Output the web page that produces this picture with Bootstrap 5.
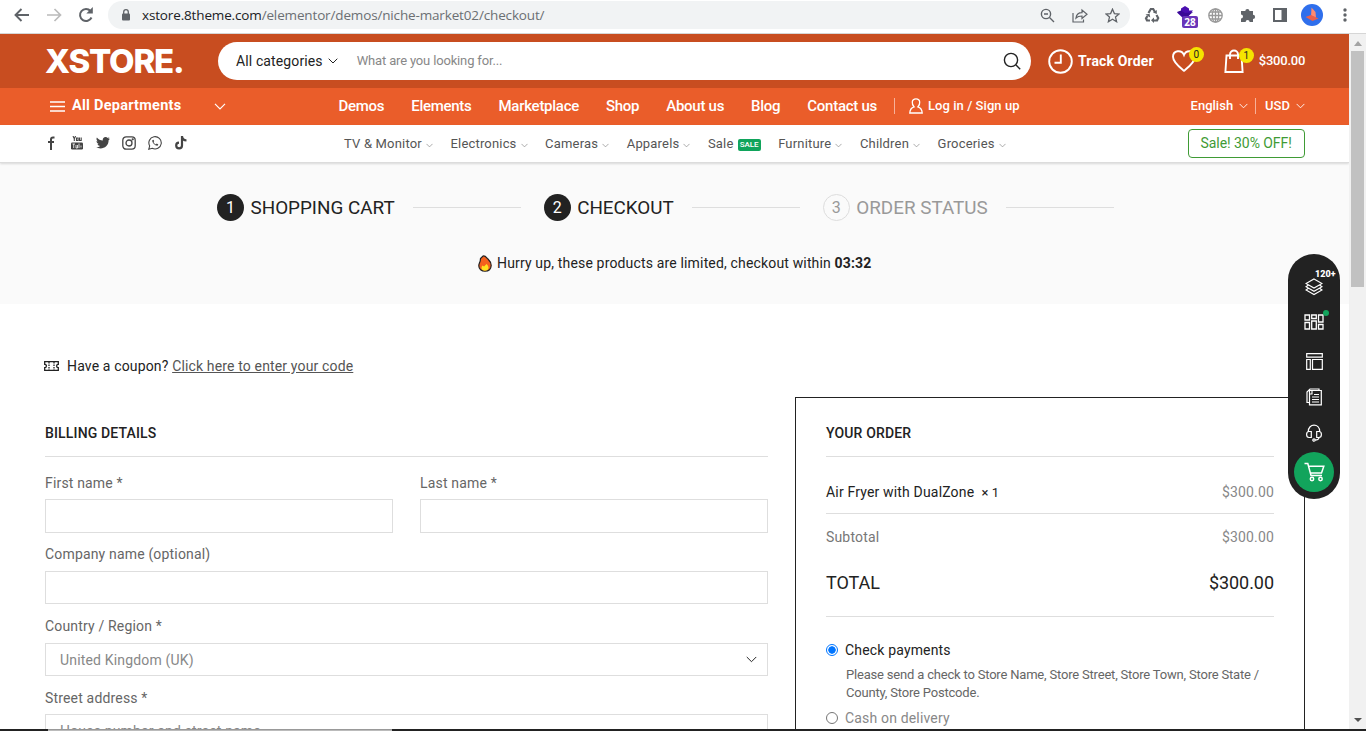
<!DOCTYPE html>
<html lang="en">
<head>
<meta charset="utf-8">
<title>Checkout – XStore</title>
<link rel="stylesheet" href="https://cdn.jsdelivr.net/npm/bootstrap@5.3.0/dist/css/bootstrap.min.css">
<style>
html,body{height:731px;overflow:hidden}
body{font-family:Roboto,"Liberation Sans",sans-serif;font-size:14px;line-height:22px;color:#222;background:#fff}
svg{display:block;flex:none;fill:none;stroke:currentColor}
svg[stroke=none]{stroke:none}
a{color:inherit;text-decoration:none}
.nw{white-space:nowrap}
.chrome{height:34px;border-bottom:1px solid #d6d6d6;padding-bottom:3px;color:#5f6368}
.omni{margin-left:14px;width:1022px;height:28px;border-radius:14px;background:#f1f3f4;padding-left:13px}
.url{font-family:"Open Sans","Noto Sans",sans-serif;font-size:13.5px;margin-left:11px;letter-spacing:-.15px;color:#6b6f73}
.url b{font-weight:400;color:#202124}
.view{height:695px}
.page{width:1349px;overflow:hidden}
.top1{height:54px;background:#c84d20;color:#fff;padding-left:45px}
.logo{width:173px;font-family:Inter,sans-serif;font-weight:800;font-size:33px;line-height:54px;letter-spacing:-1.2px}
.search{width:813px;height:38px;border-radius:19px;background:#fff;color:#222;padding:0 10px 0 18px}
.bubble{position:absolute;width:15px;height:15px;border-radius:50%;background:#f5e400;color:#222;font-size:10px;line-height:15px;text-align:center}
.top2{height:37px;background:#ea5d2a;color:#fff;font-weight:500;font-size:15px;padding:0 0 1px 50px}
.menu1{gap:27px;margin-left:112px;letter-spacing:-.27px}
.bar{width:1px;height:16px;background:#f7b199}
.top3{height:38px;border-bottom:1px solid #dcdcdc;box-shadow:0 1px 2px #0002;padding-left:44px;font-size:13px;color:#555;position:relative}
.menu2{gap:17.6px;margin-left:156px;letter-spacing:.18px}
.menu2 svg{color:#888;margin:3px 0 0 4px}
.tag{background:#10a45c;color:#fff;font-size:8px;font-weight:500;line-height:12px;height:12px;width:23px;text-align:center;border-radius:2px;margin:3px 0 0 4px;letter-spacing:-.1px}
.offer{width:117px;height:29px;border:1px solid #3f9b35;border-radius:4px;color:#3f9b35;font-size:14px;letter-spacing:-.05px;margin-left:182px;padding-bottom:1px}
.steps{height:141px;background:#fafafa;padding:31px 0 0 217px}
.num{width:27px;height:27px;border-radius:50%;background:#222;color:#fff;font-size:16px;margin-right:6.500px}
.num.off{background:none;border:1px solid #ddd;color:#999}
.step{font-size:18.85px;height:27px}
.rule{width:108px;height:1px;background:#dedede;margin:0 23px 0 18px}
.hurry{margin:31px 0 0 261px;height:22px;letter-spacing:.16px}
.coupon{margin:51px 0 0 44px;letter-spacing:.15px}
.cols{margin:20px 0 0 45px;width:1260px}
.left{width:723px;padding-top:25px}
.ttl{font-weight:500;height:34.5px;border-bottom:1px solid #dedede;font-size:14px;letter-spacing:.15px;line-height:23px}
.fld{margin-top:11px;color:#666;letter-spacing:.17px}
.fld .ctl{margin-top:6px;height:33px;border:1px solid #dedede;padding:1px 10px 0 14px;color:#888}
.first .fld{margin-top:15px;width:348px}.first .ctl{margin-top:5px;height:34px}
.street .ctl{margin-top:5px}
.order{width:510px;height:420px;border:1px solid #222;padding:24px 30px 0}
.ln{border-bottom:1px solid #dedede;letter-spacing:.17px;color:#777}
.rad{width:12px;height:12px;border-radius:50%;border:1px solid #767676;margin-right:7px}
.rad.on{border-color:#0075ff;background:radial-gradient(circle,#0075ff 0 3.4px,#fff 4px)}
.sb{width:17px;background:#f1f1f1}
.thumb{width:13px;height:236px;background:#c1c1c1}
.dock{position:absolute;left:1288px;top:254px;width:52px;height:245px;border-radius:26px;background:#222;color:#fff}
.cartbtn{width:40px;height:40px;border-radius:50%;background:#12a45c}
.task{height:2px;background:#222}.task i{margin-left:48px;width:344px;height:2px;background:#bbb;border-top:1px solid #999}
</style>
<script src="https://cdn.jsdelivr.net/npm/bootstrap@5.3.0/dist/js/bootstrap.bundle.min.js"></script>
</head>
<body>
<svg width="0" height="0" class="position-absolute"><defs><symbol id="v" viewBox="0 0 10 6"><path d="M.7.7 5 5 9.3.7"/></symbol></defs></svg>

<div class="chrome d-flex align-items-center">
  <svg width="16" height="14" viewBox="0 0 16 14" stroke-width="1.900" style="margin-left:14px"><path d="M15 7H2M7.500 1l-6 6 6 6"/></svg>
  <svg width="16" height="14" viewBox="0 0 16 14" stroke-width="1.700" style="margin-left:16px;color:#bbb"><path d="M1 7h13M8.500 1l6 6-6 6"/></svg>
  <svg width="16" height="16" viewBox="0 0 16 16" stroke-width="2" style="margin-left:16px"><path d="M13.500 10.500A6 6 0 1 1 12.500 4"/><path d="M14.800 0v6.500H8.300z" fill="currentColor" stroke="none"/></svg>
  <div class="omni d-flex align-items-center">
    <svg width="10" height="12" viewBox="0 0 10 12"><rect x="1" y="4.500" width="8" height="7" rx="1" fill="currentColor" stroke="none"/><path d="M2.700 5V3a2.300 2.300 0 0 1 4.600 0v2" stroke-width="1.300"/></svg>
    <div class="url nw"><b>xstore.8theme.com</b>/elementor/demos/niche-market02/checkout/</div>
    <svg class="ms-auto" width="15" height="15" viewBox="0 0 15 15" stroke-width="1.400"><circle cx="6" cy="6" r="4.600"/><path d="M9.500 9.500l4.500 4.500M4 6h4"/></svg>
    <svg width="16" height="15" viewBox="0 0 16 15" stroke-width="1.200" style="margin-left:17px"><path d="M1 5v9h10.500v-2.500M4 10c.5-4 3-5.300 6-5.300V2l5 4.300-5 4.200V8C7.500 8 5.500 8.400 4 10z"/></svg>
    <svg width="15" height="15" viewBox="0 0 15 15" stroke-width="1.300" style="margin:0 10px 0 17px"><path d="M7.500 1.200l1.900 4.400 4.700.4-3.600 3.100 1.100 4.600-4.100-2.500-4.100 2.500 1.100-4.600L.9 6l4.700-.4z"/></svg>
  </div>
  <svg width="16" height="16" viewBox="0 0 16 16" stroke-width="2.200" style="margin-left:14px"><path d="M4.500 6l2.300-4h2.400l2 3.500M12.500 8l1.700 3-1.200 2.500H9.800M6 13.500H3L2 11.300 3.500 9"/><path d="M12.800 3v4l-3.800-1.500zM10 10.500v5.500l-3-2.700zM1.500 7.500l4-.8.800 3.700z" fill="currentColor" stroke="none"/></svg>
  <div class="position-relative" style="margin-left:16px;width:24px;height:22px">
    <svg width="18" height="16" viewBox="0 0 18 16" stroke="none"><path d="M9 2l4 2.500v2h4L9 16 1 8.500 5 7V4.500z" fill="#4a0fb0"/><path d="M1 8l4-1.500L9 9l8-1-8 7z" fill="#3a0a96"/></svg>
    <span class="position-absolute text-center text-white" style="left:6px;top:12px;width:16px;height:12px;border-radius:2px;background:#6a35b9;font:700 10px/12px 'Open Sans'">28</span>
  </div>
  <svg width="15" height="15" viewBox="0 0 15 15" style="margin-left:8px;color:#999" stroke-width="1.300"><circle cx="7.500" cy="7.500" r="6.700"/><ellipse cx="7.500" cy="7.500" rx="3.200" ry="6.700"/><path d="M7.500 1v13M1 7.500h13M2 4h11M2 11h11"/></svg>
  <svg width="16" height="16" viewBox="0 0 16 16" stroke="none" style="margin-left:17px;fill:#5f6368"><path d="M1 4h4.300a2.100 2.100 0 1 1 4.200 0H13v3.800a2.100 2.100 0 1 1 0 4.200v3H9.600a2 2 0 1 0-4 0H1v-3.500a2 2 0 1 0 0-4z"/></svg>
  <svg width="14" height="14" viewBox="0 0 14 14" style="margin-left:17px" stroke-width="2"><path d="M1 1h12v12H1z"/><path d="M8.500 1H13v12H8.500z" fill="currentColor" stroke="none"/></svg>
  <svg width="22" height="22" viewBox="0 0 22 22" stroke="none" style="margin-left:14px"><circle cx="11" cy="11" r="11" fill="#2f6fec"/><path d="M10.500 3.500l4 4.500.5 6-5-2.500z" fill="#ff8a70"/><path d="M4.500 13l5.500-2 7.500 3.500-6 2.500z" fill="#e9604e"/></svg>
  <svg width="4" height="14" viewBox="0 0 4 14" style="margin-left:20px;fill:#5f6368" stroke="none"><circle cx="2" cy="2" r="1.700"/><circle cx="2" cy="7" r="1.700"/><circle cx="2" cy="12" r="1.700"/></svg>
</div>

<div class="view d-flex">
<div class="page">
  <header>
    <div class="top1 d-flex align-items-center">
      <div class="logo nw">XSTORE.</div>
      <div class="search d-flex align-items-center">
        <span class="nw" style="letter-spacing:.12px">All categories</span>
        <svg width="10" height="6" style="margin-left:5px"><use href="#v"/></svg>
        <span class="nw" style="margin-left:19px;font-size:13px;color:#888;letter-spacing:-.16px">What are you looking for...</span>
        <svg class="ms-auto" width="18" height="18" viewBox="0 0 18 18" stroke-width="1.400"><circle cx="8" cy="8" r="6.600"/><path d="M13 13l4.200 4.200"/></svg>
      </div>
      <svg width="25" height="25" viewBox="0 0 25 25" stroke-width="1.900" style="margin-left:17px"><circle cx="12.500" cy="12.500" r="11.300"/><path d="M12.800 5.500v8.300H6.500"/></svg>
      <b class="nw" style="margin-left:5px;font-weight:700;letter-spacing:.16px">Track Order</b>
      <div class="position-relative" style="margin-left:18px;width:34px">
        <svg width="24" height="22" viewBox="0 0 24 22" stroke-width="1.900"><path d="M12 20.800C8 17.500 1 12.500 1 6.800 1 .5 9.500-1 12 5c2.500-6 11-4.500 11 1.800 0 5.700-7 10.700-11 14z"/></svg>
        <span class="bubble" style="left:17px;top:-3px">0</span>
      </div>
      <div class="position-relative" style="margin-left:18px;width:35px">
        <svg width="20" height="24" viewBox="0 0 20 24" stroke-width="1.900"><path d="M2.500 6.500h15L18.600 23H1.400z"/><path d="M6 10V5.500a4 4 0 0 1 8 0V10"/></svg>
        <span class="bubble" style="left:15px;top:-1px">1</span>
      </div>
      <span class="nw" style="font-weight:500;font-size:13px;letter-spacing:-.25px">$300.00</span>
    </div>
    <div class="top2 d-flex align-items-center">
      <svg width="15" height="11" viewBox="0 0 15 11" stroke-width="1.600"><path d="M0 1h15M0 5.500h15M0 10h15"/></svg>
      <span class="nw" style="margin-left:7px;font-weight:700;font-size:14.5px;letter-spacing:.25px">All Departments</span>
      <svg width="12" height="7" style="margin-left:33px"><use href="#v"/></svg>
      <nav class="menu1 d-flex nw" style="margin-top:-1px"><a>Demos</a><a>Elements</a><a>Marketplace</a><a>Shop</a><a>About us</a><a>Blog</a><a>Contact us</a></nav>
      <span class="bar" style="margin-left:17px"></span>
      <svg width="14" height="16" viewBox="0 0 14 16" stroke-width="1.300" style="margin-left:14px"><path d="M7 .8c5 0 4.200 5.700 2 8 2.500.7 4 2.700 4.200 6.200H.8C1 11.500 2.500 9.500 5 8.800 2.800 6.500 2 .8 7 .8z"/></svg>
      <span class="nw" style="margin-left:5px;font-size:13px;letter-spacing:.06px">Log in / Sign up</span>
      <span class="nw" style="margin-left:171px;font-size:13px">English</span>
      <svg width="9" height="6" style="margin-left:6px"><use href="#v"/></svg>
      <span class="bar" style="margin:0 9px 0 7px"></span>
      <span style="font-size:13px">USD</span>
      <svg width="9" height="6" style="margin-left:6px"><use href="#v"/></svg>
    </div>
    <div class="top3 d-flex align-items-center">
      <div class="d-flex align-items-center" style="gap:12px;margin-top:-2px;color:#444">
        <svg width="14" height="14" viewBox="0 0 14 14" stroke-width="2"><path d="M10.500 1.500H9c-1.500 0-2 .7-2 2V14M4 6h6"/></svg>
        <svg width="14" height="14" viewBox="0 0 14 14" stroke-width="1.100"><path d="M3 0l1.300 2.700L5.600 0M4.300 2.500V5M6.500 2h1.600v2.500H6.500zM9.500 1.500v3h1.700v-3"/><rect x="1" y="6.500" width="12" height="7" rx="1.200" fill="currentColor" stroke="none"/><path d="M2.500 8h2.500M3.700 8v4M6 9v3h1.500V9M9 7.500V12M11 9.500v2" stroke="#fff" stroke-width=".8"/></svg>
        <svg width="14" height="14" viewBox="0 0 14 14" stroke="none" style="fill:#444"><path d="M14 2.700l-1.400 1.500c.1 5-3.800 8.200-8 8.200-1.700 0-3.300-.5-4.600-1.300 1.600.2 3-.3 4.200-1.200-1.300 0-2.300-.8-2.700-2h1.200C1.400 7.500.5 6.400.5 5l1.300.4C.5 4.500.1 2.900.9 1.600 2.400 3.400 4.400 4.500 6.800 4.600 6.300 2.500 7.900 1 9.600 1c.8 0 1.500.3 2.100.9l1.800-.7-1.200 1.600z"/></svg>
        <svg width="14" height="14" viewBox="0 0 14 14" stroke-width="1.300"><rect x=".8" y=".8" width="12.400" height="12.400" rx="3.400"/><circle cx="7" cy="7" r="3"/><circle cx="10.700" cy="3.300" r=".5"/></svg>
        <svg width="14" height="14" viewBox="0 0 14 14" stroke-width="1.100"><path d="M.8 13.200l.9-3.300A6.200 6.200 0 1 1 4.200 12.300z"/><path d="M4.300 4.200c-.5 2.500 3.200 6 5.500 5.400l.5-1.200-1.600-.8-.8.900C6.800 8 5.900 7.200 5.500 6.100l.7-.8-.7-1.500z" fill="currentColor" stroke="none"/></svg>
        <svg width="14" height="14" viewBox="0 0 14 14" stroke-width="2.200"><path d="M8 0v9.500A2.900 2.900 0 1 1 5 6.600M8 .5C8.300 3 10 4.300 12.500 4.500"/></svg>
      </div>
      <nav class="menu2 d-flex nw">
        <a class="d-flex align-items-center">TV &amp; Monitor<svg width="7" height="5"><use href="#v"/></svg></a>
        <a class="d-flex align-items-center">Electronics<svg width="7" height="5"><use href="#v"/></svg></a>
        <a class="d-flex align-items-center">Cameras<svg width="7" height="5"><use href="#v"/></svg></a>
        <a class="d-flex align-items-center">Apparels<svg width="7" height="5"><use href="#v"/></svg></a>
        <a class="d-flex align-items-center">Sale<span class="tag">SALE</span></a>
        <a class="d-flex align-items-center">Furniture<svg width="7" height="5"><use href="#v"/></svg></a>
        <a class="d-flex align-items-center">Children<svg width="7" height="5"><use href="#v"/></svg></a>
        <a class="d-flex align-items-center">Groceries<svg width="7" height="5"><use href="#v"/></svg></a>
      </nav>
      <a class="offer nw d-flex align-items-center justify-content-center">Sale! 30% OFF!</a>
    </div>
  </header>

  <section class="steps">
    <div class="step d-flex align-items-center nw">
      <span class="num d-flex align-items-center justify-content-center">1</span>SHOPPING CART<i class="rule"></i>
      <span class="num d-flex align-items-center justify-content-center">2</span>CHECKOUT<i class="rule"></i>
      <span class="num off d-flex align-items-center justify-content-center">3</span><span style="color:#999">ORDER STATUS</span><i class="rule"></i>
    </div>
    <div class="hurry d-flex align-items-center nw">
      <svg width="14" height="17" viewBox="0 0 14 17"><path d="M5 1c3-.5 3.500 2 5 3 2 2 3.300 4 3.200 6.500-.2 3.700-2.700 5.700-6.200 5.700S.8 14 .8 10.800C.8 8 2.500 7.500 2.500 3.500z" fill="#f4611e" stroke="#222" stroke-width="1.200"/><path d="M4.500 10.500l1.500 1L8.500 9c1.500 1.500 2.200 3 2 4.300-.3 1.700-1.500 2.400-3.500 2.400S3.700 15 3.500 13.300c-.1-1 .3-1.900 1-2.800z" fill="#ffe21f" stroke="none"/></svg>
      <span style="margin-left:5px">Hurry up, these products are limited, checkout within <b style="font-weight:700">03:32</b></span>
    </div>
  </section>

  <main>
    <div class="coupon d-flex align-items-center nw">
      <svg width="15" height="10" viewBox="0 0 15 10" stroke-width="1.300"><path d="M.7.700h13.600v2.600a1.700 1.700 0 0 0 0 3.400v2.600H.7V6.700a1.700 1.700 0 0 0 0-3.400z"/><path d="M5 1v8M10 1v8" stroke-dasharray="1.500 1"/></svg>
      <span style="margin-left:8px">Have a coupon? <a class="text-decoration-underline" style="color:#555">Click here to enter your code</a></span>
    </div>
    <div class="cols d-flex justify-content-between">
      <form class="left">
        <div class="ttl">BILLING DETAILS</div>
        <div class="first d-flex justify-content-between">
          <div class="fld">First name *<div class="ctl"></div></div>
          <div class="fld">Last name *<div class="ctl"></div></div>
        </div>
        <div class="fld" style="margin-top:10px">Company name (optional)<div class="ctl"></div></div>
        <div class="fld">Country / Region *<div class="ctl d-flex align-items-center justify-content-between">United Kingdom (UK)<svg width="11" height="7" stroke-width=".9" style="color:#222"><use href="#v"/></svg></div></div>
        <div class="fld street">Street address *<div class="ctl d-flex align-items-center">House number and street name</div></div>
      </form>
      <aside class="order">
        <div class="ttl">YOUR ORDER</div>
        <div class="ln d-flex justify-content-between" style="padding:24px 0 9px"><span style="color:#222">Air Fryer with DualZone&nbsp; <span style="font-size:13px;letter-spacing:0">× 1</span></span><span style="color:#888">$300.00</span></div>
        <div class="d-flex justify-content-between" style="padding-top:12px;color:#777;letter-spacing:.17px"><span>Subtotal</span><span style="color:#888">$300.00</span></div>
        <div class="ln d-flex justify-content-between" style="padding:24px 0 22px;font-size:18px;color:#222;letter-spacing:-.05px"><span>TOTAL</span><span>$300.00</span></div>
        <div class="d-flex align-items-center" style="margin-top:22px;letter-spacing:.17px"><i class="rad on"></i>Check payments</div>
        <div style="margin:5px 0 0 20px;font-size:13px;line-height:18px;color:#666;letter-spacing:-.19px">Please send a check to Store Name, Store Street, Store Town, Store State / County, Store Postcode.</div>
        <div class="d-flex align-items-center" style="margin-top:5px;color:#888;letter-spacing:.17px"><i class="rad"></i>Cash on delivery</div>
      </aside>
    </div>
  </main>
</div>
<div class="sb d-flex flex-column align-items-center">
  <svg width="8" height="5" viewBox="0 0 8 5" style="fill:#a3a3a3;margin:7px 0 5px" stroke="none"><path d="M4 0l4 5H0z"/></svg>
  <div class="thumb"></div>
  <svg class="mt-auto" width="8" height="4" viewBox="0 0 8 4" style="fill:#505050;margin-bottom:7px" stroke="none"><path d="M0 0h8L4 4z"/></svg>
</div>
</div>

<div class="dock">
  <div class="d-flex flex-column align-items-center position-relative">
    <span class="position-absolute" style="left:27px;top:15px;font-size:9px;line-height:10px;font-weight:900">120+</span>
    <svg width="18" height="18" viewBox="0 0 18 18" stroke-width="1.100" style="margin-top:24px"><path d="M9 1l8 4.500L9 10 1 5.500zM3.500 7L1 8.800l8 4.500 8-4.500L14.500 7M3.500 10.300L1 12l8 4.500 8-4.500-2.500-1.700"/></svg>
    <i class="position-absolute rounded-circle" style="left:35px;top:56px;width:6px;height:6px;background:#12a45c"></i>
    <svg width="20" height="16" viewBox="0 0 20 16" stroke-width="1.300" style="margin-top:18px"><path d="M1 1h4.500v5H1zM1 8.500h4.500V15H1zM7.700 1h4.600v3.500H7.700zM7.700 7h4.600v8H7.700zM14.500 1H19v7h-4.500zM14.500 10.500H19V15h-4.500z"/></svg>
    <svg width="17" height="17" viewBox="0 0 17 17" stroke-width="1.200" style="margin-top:23px"><path d="M.7.700h15.600v3.500H.7zM.7 6.500h3.600v9.800H.7zM6.500 6.500h9.800v9.800H6.500z"/></svg>
    <svg width="16" height="18" viewBox="0 0 16 18" stroke-width="1.200" style="margin-top:18px"><path d="M3.500 2.500h11.800v14.300H3.500z"/><path d="M3 14.500H1V4l3-3h9v1M6 9h7M6 11.500h7M6 14h7M8 6.500h5M6 3v3h-2"/></svg>
    <svg width="16" height="18" viewBox="0 0 16 18" stroke-width="1.200" style="margin-top:18px"><path d="M2.300 7.500C2.300-1 13.700-1 13.700 7.500M3 7.500h2.300v6H3C-.2 13.500-.2 7.500 3 7.500zM13 7.500h-2.300v6H13c3.200 0 3.200-6 0-6zM13 13.500c0 2-1.500 2.500-4 2.500"/><circle cx="8" cy="16" r="1.200"/></svg>
    <div class="cartbtn d-flex align-items-center justify-content-center" style="margin-top:10px"><svg width="21" height="20" viewBox="0 0 21 20" stroke-width="1.500"><path d="M.5 1.500h3.300L7 13.500h11M4.500 4.300h15.300L17.500 11H6.300"/><circle cx="8" cy="17" r="1.700"/><circle cx="16.500" cy="17" r="1.700"/></svg></div>
  </div>
</div>
<div class="task d-flex"><i></i></div>
</body>
</html>
